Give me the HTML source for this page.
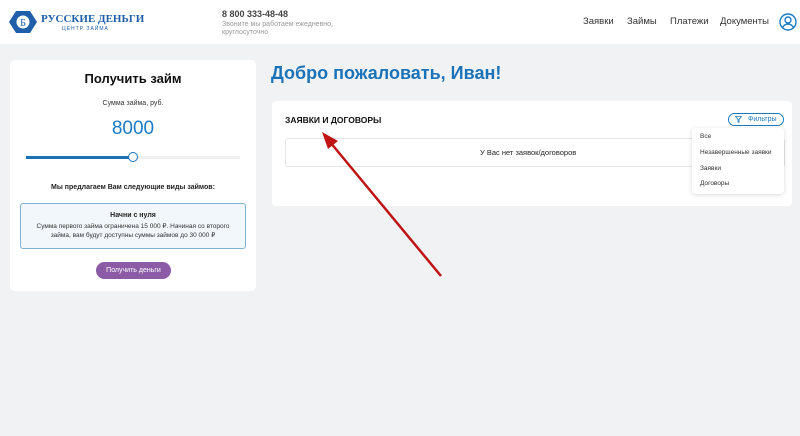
<!DOCTYPE html>
<html><head><meta charset="utf-8"><style>
*{margin:0;padding:0;box-sizing:border-box}
body{width:800px;height:436px;background:#f1f2f4;font-family:"Liberation Sans","Noto Sans CJK SC",sans-serif;position:relative;overflow:hidden;color:#222}
.a{position:absolute}
</style></head><body>
<div class="a" style="left:0;top:0;width:800px;height:44px;background:#fff"></div>
<svg class="a" style="left:9px;top:10px" width="28" height="24" viewBox="0 0 28 24"><path d="M7 1h14l7 11-7 11H7L0 12z" fill="#1f5ea8"/><circle cx="14" cy="12" r="6.5" fill="#fff"/><text x="14" y="16" font-size="10" text-anchor="middle" fill="#1f5ea8" font-family="Liberation Serif">Б</text></svg>
<div class="a" style="left:41px;top:13px;font:bold 11px 'Liberation Serif',serif;color:#1f5ea8">РУССКИЕ ДЕНЬГИ</div>
<div class="a" style="left:62px;top:26px;font-size:5px;color:#1f5ea8;letter-spacing:1px">ЦЕНТР ЗАЙМА</div>
<div class="a" style="left:222px;top:9px;font-size:9px;font-weight:bold;color:#444">8 800 333-48-48</div>
<div class="a" style="left:222px;top:21px;font-size:7px;color:#999;line-height:8px">Звоните мы работаем ежедневно,<br>круглосуточно</div>
<div class="a" style="left:583px;top:16px;font-size:9.5px;color:#333">Заявки</div>
<div class="a" style="left:627px;top:16px;font-size:9.5px;color:#333">Займы</div>
<div class="a" style="left:670px;top:16px;font-size:9.5px;color:#333">Платежи</div>
<div class="a" style="left:720px;top:16px;font-size:9.5px;color:#333">Документы</div>
<svg class="a" style="left:779px;top:13px" width="18" height="18" viewBox="0 0 18 18" fill="none" stroke="#1a7bc4" stroke-width="1.4"><circle cx="9" cy="9" r="8"/><circle cx="9" cy="7" r="3"/><path d="M3.5 14.5c1.5-2.5 3.5-3.5 5.5-3.5s4 1 5.5 3.5"/></svg>

<div class="a" style="left:10px;top:60px;width:246px;height:231px;background:#fff;border-radius:5px"></div>
<div class="a" style="left:10px;top:71px;width:246px;text-align:center;font-size:13px;font-weight:bold;color:#111">Получить займ</div>
<div class="a" style="left:10px;top:100px;width:246px;text-align:center;font-size:7px;color:#333">Сумма займа, руб.</div>
<div class="a" style="left:10px;top:118px;width:246px;text-align:center;font-size:19px;color:#1a7bc4">8000</div>
<div class="a" style="left:26px;top:156px;width:214px;height:3px;background:#f0f0f0"></div>
<div class="a" style="left:26px;top:156px;width:107px;height:3px;background:#1a6fb5"></div>
<div class="a" style="left:128px;top:152px;width:10px;height:10px;border-radius:50%;background:#fff;border:1.5px solid #1a6fb5"></div>
<div class="a" style="left:10px;top:184px;width:246px;text-align:center;font-size:7px;font-weight:bold;color:#222">Мы предлагаем Вам следующие виды займов:</div>
<div class="a" style="left:20px;top:203px;width:226px;height:46px;background:#f1f7fb;border:1px solid #7fb3d6;border-radius:3px;text-align:center">
<div style="font-size:7px;font-weight:bold;margin-top:8px;color:#222">Начни с нуля</div>
<div style="font-size:6.5px;line-height:9px;margin-top:3px;color:#333">Сумма первого займа ограничена 15 000 ₽. Начиная со второго<br>займа, вам будут доступны суммы займов до 30 000 ₽</div></div>
<div class="a" style="left:96px;top:262px;width:75px;height:17px;border-radius:9px;background:#8c5ba6;color:#fff;font-size:7px;text-align:center;line-height:17px">Получить деньги</div>

<div class="a" style="left:271px;top:63px;font-size:18px;font-weight:bold;color:#1a72b8">Добро пожаловать, Иван!</div>
<div class="a" style="left:272px;top:101px;width:520px;height:105px;background:#fff;border-radius:4px"></div>
<div class="a" style="left:285px;top:115px;font-size:8.5px;font-weight:bold;color:#111">ЗАЯВКИ И ДОГОВОРЫ</div>
<div class="a" style="left:285px;top:138px;width:500px;height:29px;border:1px solid #e5e5e5;border-radius:3px"></div>
<div class="a" style="left:480px;top:148px;font-size:7.5px;color:#222">У Вас нет заявок/договоров</div>
<div class="a" style="left:728px;top:113px;width:56px;height:13px;border:1px solid #1a7bc4;border-radius:7px;font-size:7px;color:#1a7bc4;line-height:11px;padding-left:19px">Фильтры</div>
<svg class="a" style="left:735px;top:116px" width="7" height="7" viewBox="0 0 7 7" fill="none" stroke="#1a7bc4" stroke-width=".8"><path d="M.5.5h6L4 3.5V6.5L3 6V3.5z"/></svg>
<div class="a" style="left:692px;top:128px;width:92px;height:66px;background:#fff;border-radius:4px;box-shadow:0 1px 5px rgba(0,0,0,.15);font-size:6.5px;color:#333">
<div class="a" style="left:8px;top:5px">Все</div>
<div class="a" style="left:8px;top:21px">Незавершенные заявки</div>
<div class="a" style="left:8px;top:37px">Заявки</div>
<div class="a" style="left:8px;top:52px">Договоры</div></div>
<svg class="a" style="left:0;top:0" width="800" height="436"><line x1="441" y1="276" x2="330" y2="142" stroke="#c01414" stroke-width="2.5"/><polygon points="322,132 338,141 328,149" fill="#c01414"/></svg>
</body></html>
